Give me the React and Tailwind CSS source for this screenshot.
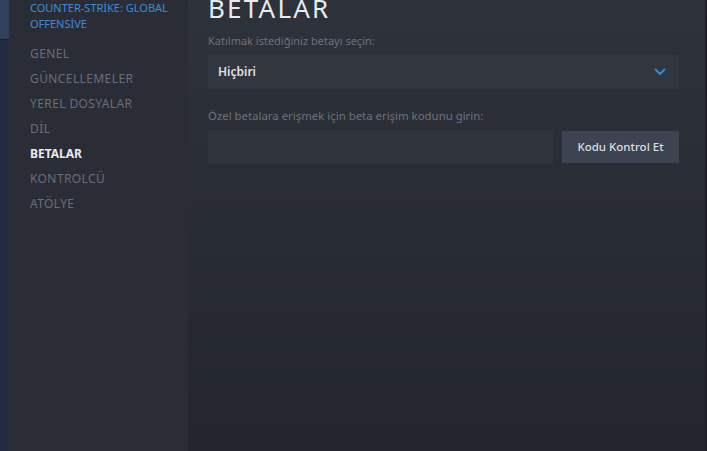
import React from "react";

const navItems = ["GENEL", "GÜNCELLEMELER", "YEREL DOSYALAR", "DİL", "BETALAR", "KONTROLCÜ", "ATÖLYE"];

export default function App() {
  return (
    <div className="flex h-[451px] w-[707px] overflow-hidden bg-[#23262e] font-['Noto_Sans',sans-serif]">
      {/* left edge strip */}
      <div className="flex w-[9px] flex-col">
        <div className="h-[40px] border-b border-[#1a2130] bg-[#33405a]" />
        <div className="flex-1 bg-[#222c3e]" />
      </div>

      {/* sidebar */}
      <div className="w-[179px] bg-[#2a2d36] pl-[21px]">
        <div className="text-[11px] leading-[16px] text-[#3f8ad6] uppercase">
          COUNTER-STRİKE: GLOBAL
          <br />
          OFFENSİVE
        </div>
        <div className="mt-[9px] flex flex-col">
          {navItems.map((item) => (
            <div
              key={item}
              className={
                item === "BETALAR"
                  ? "h-[25px] text-[12px] leading-[25px] font-bold text-[#e8eaec]"
                  : "h-[25px] text-[12px] leading-[25px] tracking-[0.4px] text-[#686e79]"
              }
            >
              {item}
            </div>
          ))}
        </div>
      </div>

      {/* main content */}
      <div className="flex-1 border-r-2 border-[#1d2027] bg-gradient-to-b from-[#2e323b] to-[#23262f] pr-[26px] pl-[20px]">
        <h1 className="-mt-[4px] text-[26px] leading-[25px] tracking-[2.2px] text-[#e9ebed]">BETALAR</h1>

        <div className="mt-[12px] text-[11px] leading-[16px] text-[#6b717c]">Katılmak istediğiniz betayı seçin:</div>
        <div className="mt-[6px] flex h-[34px] items-center justify-between bg-[#32363f] pr-[13px] pl-[10px]">
          <span className="text-[12px] font-semibold text-[#dfe1e3]">Hiçbiri</span>
          <svg width="12" height="8" viewBox="0 0 12 8" fill="none">
            <path d="M1.5 1.5 L6 6 L10.5 1.5" stroke="#2f8ee0" strokeWidth="2" strokeLinecap="round" strokeLinejoin="round" />
          </svg>
        </div>

        <div className="mt-[19px] text-[11.4px] leading-[16px] text-[#6b717c]">
          Özel betalara erişmek için beta erişim kodunu girin:
        </div>
        <div className="mt-[6px] flex gap-[9px]">
          <div className="h-[34px] flex-1 bg-[#30343d]" />
          <button className="mt-[1px] h-[32px] w-[117px] bg-[#3d4350] text-[11.5px] font-medium text-[#dcdee1]">
            Kodu Kontrol Et
          </button>
        </div>
      </div>
    </div>
  );
}
